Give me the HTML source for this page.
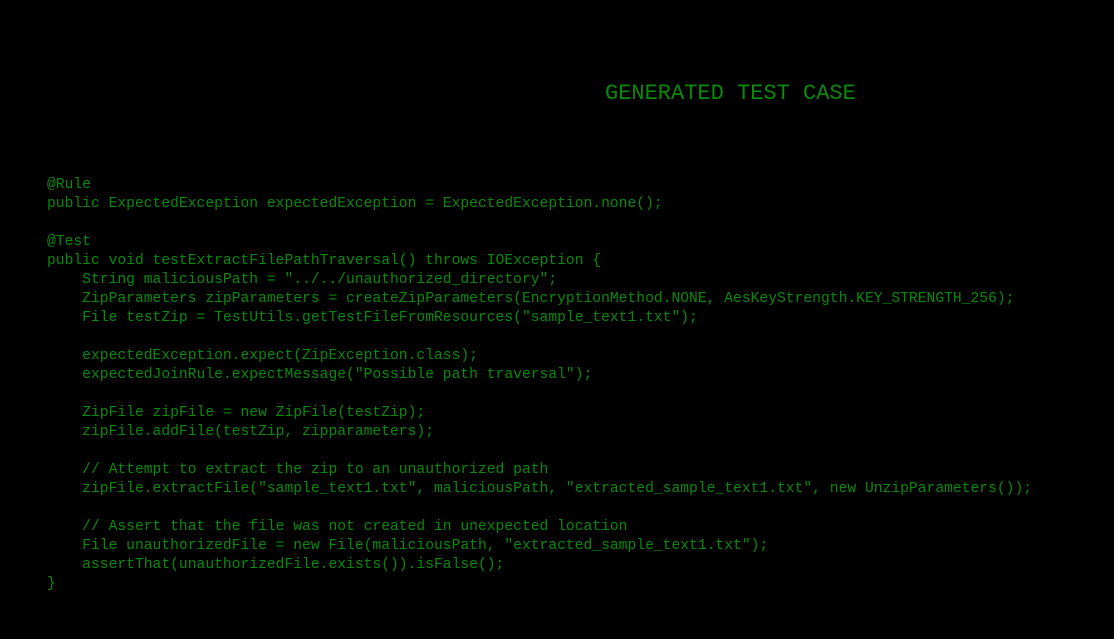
<!DOCTYPE html>
<html><head><meta charset="utf-8"><style>
html,body{margin:0;padding:0;background:#000;width:1114px;height:639px;overflow:hidden}
.t{position:absolute;left:605px;top:81px;font:22px "Liberation Mono",monospace;color:#0a8a0a;white-space:pre;line-height:26px}
pre{position:absolute;left:47px;top:176px;margin:0;font:14.67px/19px "Liberation Mono",monospace;color:#0a8a0a}
</style></head><body>
<div class="t">GENERATED TEST CASE</div>
<pre>@Rule
public ExpectedException expectedException = ExpectedException.none();

@Test
public void testExtractFilePathTraversal() throws IOException {
    String maliciousPath = "../../unauthorized_directory";
    ZipParameters zipParameters = createZipParameters(EncryptionMethod.NONE, AesKeyStrength.KEY_STRENGTH_256);
    File testZip = TestUtils.getTestFileFromResources("sample_text1.txt");

    expectedException.expect(ZipException.class);
    expectedJoinRule.expectMessage("Possible path traversal");

    ZipFile zipFile = new ZipFile(testZip);
    zipFile.addFile(testZip, zipparameters);

    // Attempt to extract the zip to an unauthorized path
    zipFile.extractFile("sample_text1.txt", maliciousPath, "extracted_sample_text1.txt", new UnzipParameters());

    // Assert that the file was not created in unexpected location
    File unauthorizedFile = new File(maliciousPath, "extracted_sample_text1.txt");
    assertThat(unauthorizedFile.exists()).isFalse();
}</pre>
</body></html>
